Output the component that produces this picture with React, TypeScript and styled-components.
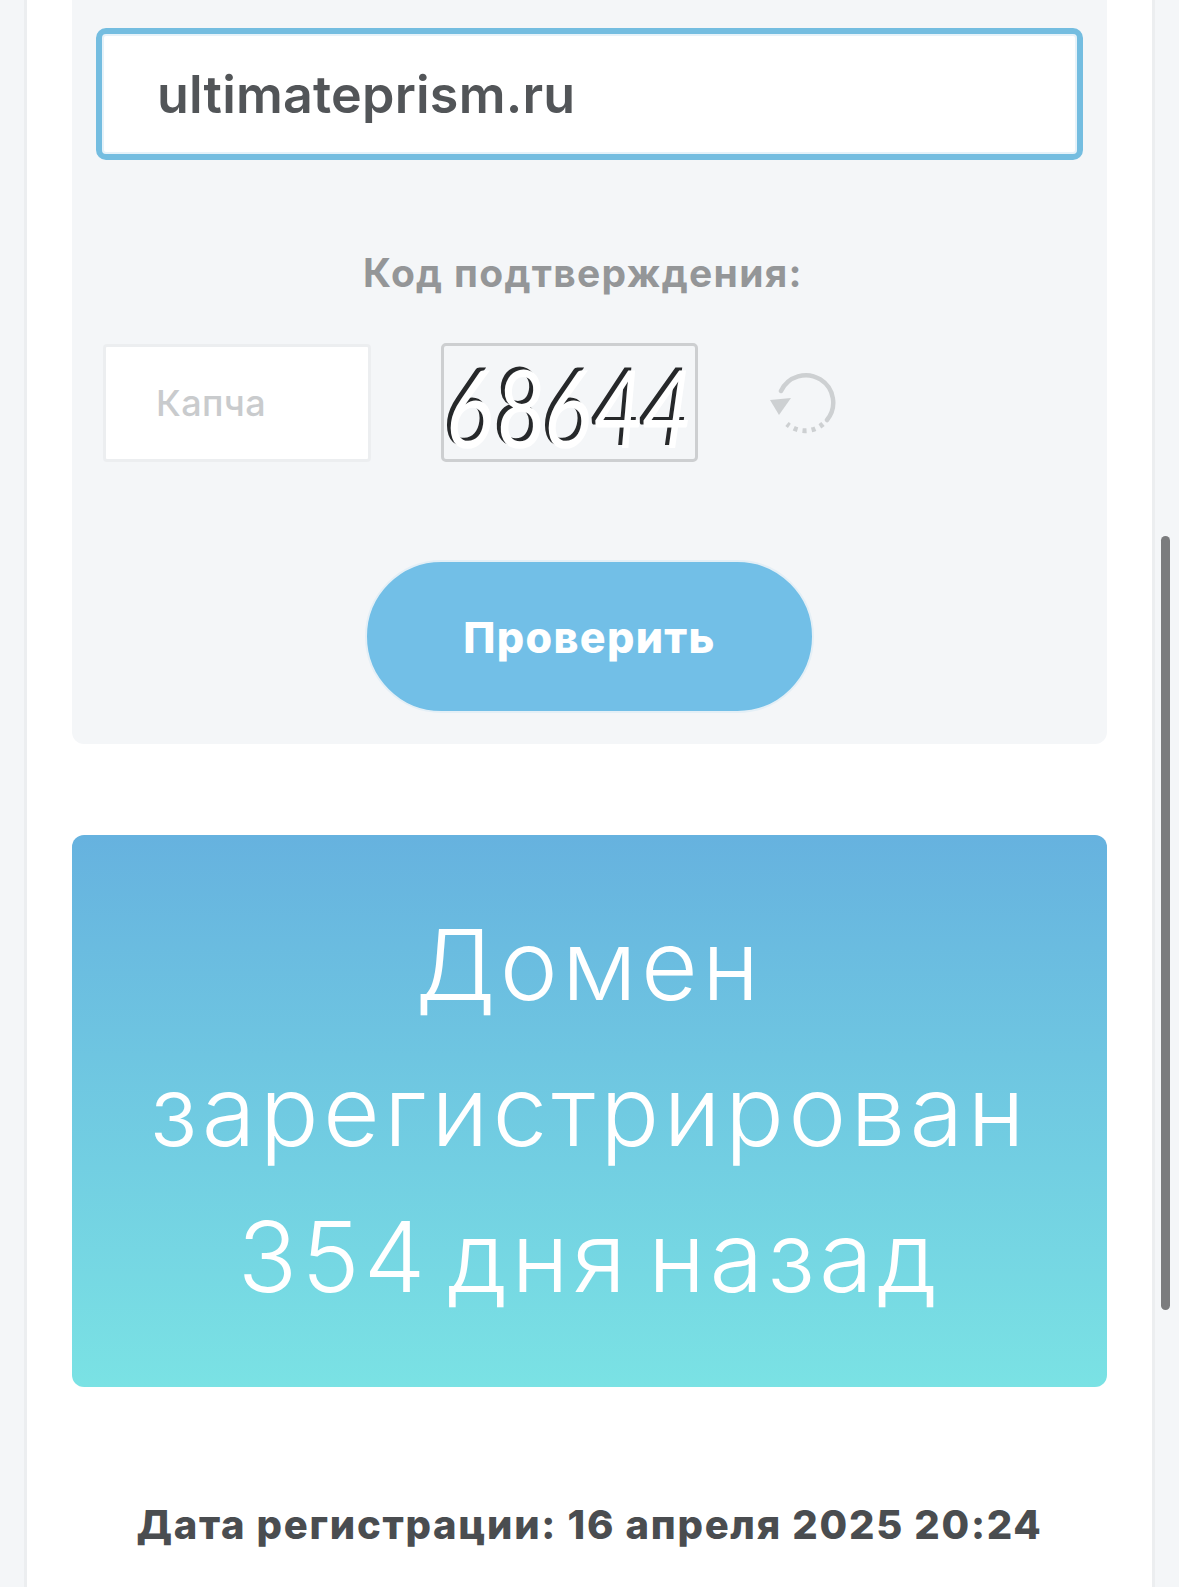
import React from 'react';
import styled, { createGlobalStyle } from 'styled-components';

const GlobalStyle = createGlobalStyle`
  html, body {
    margin: 0;
    padding: 0;
    background: #f4f6f8;
  }
  * {
    box-sizing: border-box;
  }
`;

const Page = styled.div`
  position: relative;
  width: 1179px;
  height: 1587px;
  overflow: hidden;
  padding: 0 24px;
  background: #f4f6f8;
  font-family: Inter, 'Noto Sans', sans-serif;
`;

const Sheet = styled.main`
  width: 1131px;
  height: 100%;
  background: #fff;
  border-left: 3px solid #eceef0;
  border-right: 3px solid #eceef0;
  padding: 0 45px;
`;

const CheckPanel = styled.section`
  background: #f4f6f8;
  border-radius: 0 0 12px 12px;
  padding: 28px 24px 31px;
  display: flex;
  flex-direction: column;
  align-items: center;
`;

const DomainInput = styled.div`
  align-self: stretch;
  height: 132px;
  background: #fff;
  border: 6px solid #74bde0;
  border-radius: 10px;
  box-shadow: inset 0 0 0 2px #e6f2f9;
  padding-left: 55px;
  display: flex;
  align-items: center;
  font-size: 52px;
  font-weight: 600;
  letter-spacing: 0.2px;
  color: #525558;
`;

const CodeLabel = styled.label`
  margin: 93px 13px 0 0;
  line-height: 40px;
  font-size: 39px;
  font-weight: 700;
  letter-spacing: 1.3px;
  color: #949698;
`;

const CaptchaRow = styled.div`
  align-self: stretch;
  margin-top: 50px;
  padding-left: 7px;
  display: flex;
  align-items: center;
  height: 119px;
`;

const CaptchaInput = styled.div`
  width: 268px;
  height: 118px;
  background: #fff;
  border: 3px solid #eceef0;
  border-radius: 4px;
  padding-left: 50px;
  display: flex;
  align-items: center;
  font-size: 36px;
  font-weight: 500;
  letter-spacing: 0.4px;
  color: #c9cbcd;
`;

const CaptchaImage = styled.div`
  width: 257px;
  height: 119px;
  margin-left: 70px;
  border: 3px solid #cdcfd1;
  border-radius: 5px;
  background: #f4f6f8;
  display: flex;
  align-items: center;
  padding-left: 1px;
  font-family: Lato, sans-serif;
  font-weight: 400;
  font-size: 82px;
`;

const Digit = styled.span<{ $skew: number }>`
  position: relative;
  display: block;
  width: 49px;
  line-height: 82px;
  color: #26282a;
  transform: skewX(${({ $skew }) => $skew}deg) scaleY(1.32);

  &::after {
    content: attr(data-digit);
    position: absolute;
    left: 4px;
    top: 2px;
    color: #fff;
  }
`;

const RefreshButton = styled.button`
  margin-left: 71px;
  padding: 0;
  border: none;
  background: none;
  display: flex;
`;

const SubmitButton = styled.button`
  margin-top: 98px;
  width: 449px;
  height: 153px;
  border-radius: 77px;
  border: 2px solid #e4eff6;
  background: #72bfe7;
  color: #fff;
  font-family: inherit;
  font-size: 43px;
  font-weight: 800;
  letter-spacing: 1.3px;
`;

const AgeBanner = styled.section`
  margin-top: 91px;
  height: 552px;
  border-radius: 12px;
  background: linear-gradient(180deg, #66b2df 0%, #7ae2e4 100%);
  display: flex;
  align-items: center;
  justify-content: center;
  text-align: center;
  font-size: 98px;
  font-weight: 300;
  letter-spacing: 4.2px;
  word-spacing: -14px;
  line-height: 146px;
  color: #fff;
`;

const RegDate = styled.p`
  margin: 118px 0 0;
  text-align: center;
  font-size: 40px;
  font-weight: 800;
  letter-spacing: 1.7px;
  line-height: 40px;
  color: #4a4d50;
`;

const ScrollThumb = styled.div`
  position: absolute;
  left: 1161px;
  top: 536px;
  width: 9px;
  height: 774px;
  border-radius: 5px;
  background: #7b7c7e;
`;

const digits: [string, number][] = [
  ['6', -7],
  ['8', -3],
  ['6', -7],
  ['4', -5],
  ['4', -8],
];

const RefreshIcon: React.FC = () => (
  <svg width="72" height="62" viewBox="0 0 72 62" fill="none" stroke="#cdd0d2">
    <path d="M12 19 A27.4 27.4 0 1 1 58 48" strokeWidth="4.5" strokeLinecap="round" />
    <path d="M54 52 A27.4 27.4 0 0 1 18 52" strokeWidth="5" strokeDasharray="4 5" />
    <path d="M1 28 L22 26 L10 43 Z" fill="#cdd0d2" stroke="none" />
  </svg>
);

const App: React.FC = () => (
  <>
    <GlobalStyle />
    <Page>
      <Sheet>
        <CheckPanel>
          <DomainInput>ultimateprism.ru</DomainInput>
          <CodeLabel>Код подтверждения:</CodeLabel>
          <CaptchaRow>
            <CaptchaInput>Капча</CaptchaInput>
            <CaptchaImage>
              {digits.map(([digit, skew], index) => (
                <Digit key={index} data-digit={digit} $skew={skew}>
                  {digit}
                </Digit>
              ))}
            </CaptchaImage>
            <RefreshButton>
              <RefreshIcon />
            </RefreshButton>
          </CaptchaRow>
          <SubmitButton>Проверить</SubmitButton>
        </CheckPanel>
        <AgeBanner>
          <div>
            Домен
            <br />
            зарегистрирован
            <br />
            354 дня назад
          </div>
        </AgeBanner>
        <RegDate>Дата регистрации: 16 апреля 2025 20:24</RegDate>
      </Sheet>
      <ScrollThumb />
    </Page>
  </>
);

export default App;
